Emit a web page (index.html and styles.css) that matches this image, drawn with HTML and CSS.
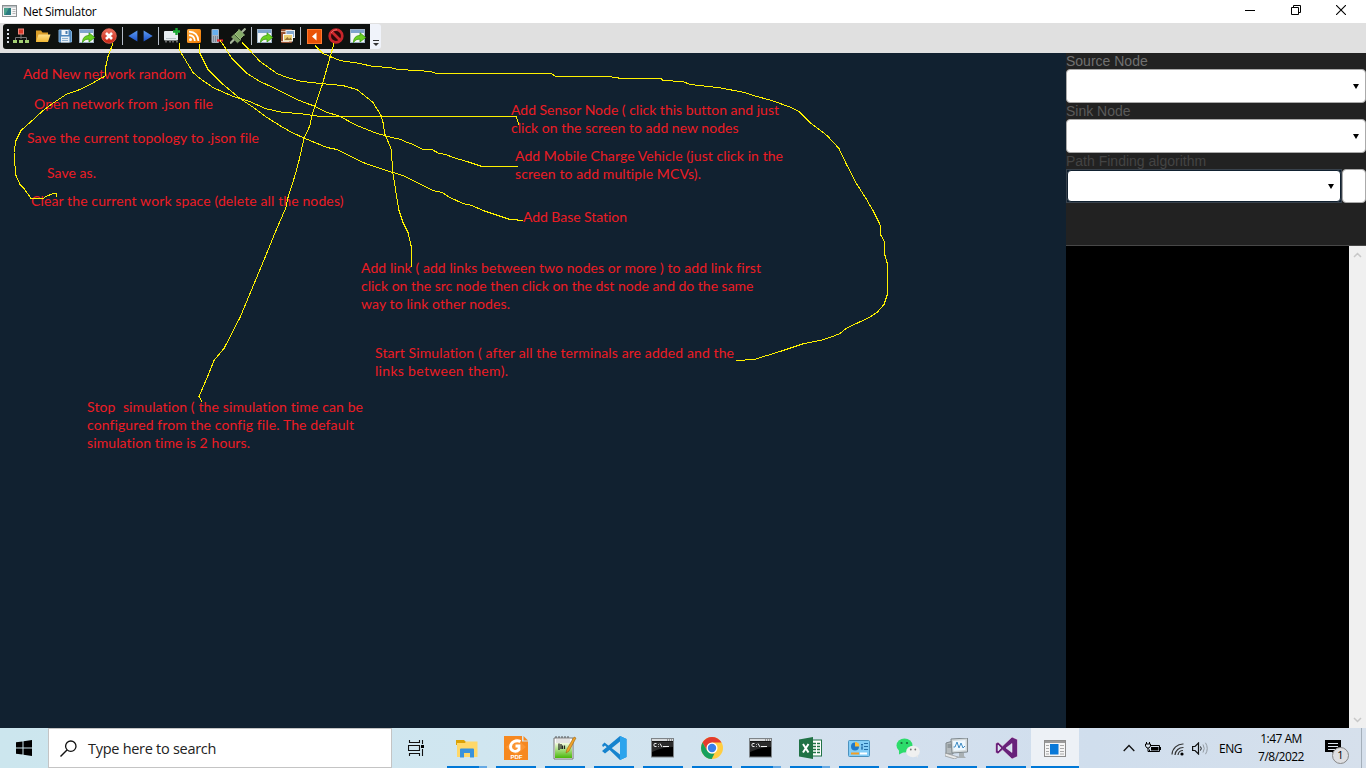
FILE: index.html
```html
<!DOCTYPE html>
<html lang="en">
<head>
<meta charset="utf-8">
<title>Net Simulator</title>
<link rel="stylesheet" href="styles.css">
</head>
<body>
<svg class="defs" width="0" height="0" aria-hidden="true">
  <defs>
    <linearGradient id="gFolder" x1="0" y1="0" x2="0" y2="1"><stop offset="0" stop-color="#ffe08a"/><stop offset="1" stop-color="#f2b733"/></linearGradient>
    <linearGradient id="gRed" x1="0" y1="0" x2="0" y2="1"><stop offset="0" stop-color="#ee7461"/><stop offset="1" stop-color="#c3200f"/></linearGradient>
    <linearGradient id="gOrange" x1="0" y1="0" x2="1" y2="1"><stop offset="0" stop-color="#ffab40"/><stop offset="1" stop-color="#f07800"/></linearGradient>
    <linearGradient id="gBlue" x1="0" y1="0" x2="0" y2="1"><stop offset="0" stop-color="#5e9df2"/><stop offset="1" stop-color="#1a50c8"/></linearGradient>
    <linearGradient id="gNote" x1="0" y1="0" x2="0" y2="1"><stop offset="0" stop-color="#f4fbe0"/><stop offset="1" stop-color="#49b80a"/></linearGradient>
    <symbol id="export" viewBox="0 0 16 16">
      <rect x=".5" y="1.500" width="14" height="13" fill="#f4f6f8" stroke="#9fb3c6"/>
      <rect x="1" y="2" width="13" height="3" fill="#7ea4cd"/>
      <path d="M3.500 14.500C3.500 10 6 7.500 10 7.500V4.800L15.700 9.500L10 14V11.200C7 11 5 12 3.500 14.500Z" fill="#6bd022" stroke="#3b9a12" stroke-width=".8"/>
    </symbol>
    <symbol id="cmd" viewBox="0 0 24 20">
      <rect x=".5" y=".5" width="22" height="18.500" fill="#000" stroke="#7d8387"/>
      <rect x="1" y="1" width="21" height="2" fill="#d7dadc"/>
      <path d="M16 2h1M18 2h1M20 2h1" stroke="#555"/>
      <path d="M1 3.500H22V9Q12 9 1 14Z" fill="#2b2b2b"/>
      <path d="M5.500 5.500H4Q3 5.500 3 6.500V7.500Q3 8.500 4 8.500H5.500M7.500 6V6.700M7.500 8V8.700M9 5.500L11 9M12 8.500H18" fill="none" stroke="#f1f1f1"/>
    </symbol>
  </defs>
</svg>

<div class="window">
  <header class="titlebar">
    <svg class="app-icon" width="15" height="12" viewBox="0 0 15 12"><rect x=".5" y=".5" width="14" height="11" fill="#f5f5f5" stroke="#8b9092"/><rect x="1" y="1" width="13" height="1.500" fill="#b9c0c3"/><rect x="2" y="3" width="7" height="7" fill="#2a7a80"/><path d="M2 3H7L3 10H2Z" fill="#4aa08a"/><path d="M10.500 4.500h3M10.500 6.500h3M10.500 8.500h3" stroke="#b5b5b5"/></svg>
    <span class="title">Net Simulator</span>
    <div class="window-controls">
      <svg width="10" height="10" viewBox="0 0 10 10"><path d="M0 5.500H10" stroke="#000"/></svg>
      <svg width="10" height="10" viewBox="0 0 10 10"><path d="M.5 2.500H7.500V9.500H.5ZM2.500 2.500V.5H9.500V7.500H7.500" fill="none" stroke="#000"/></svg>
      <svg width="10" height="10" viewBox="0 0 10 10"><path d="M0 0L10 10M10 0L0 10" stroke="#000" stroke-width="1.100"/></svg>
    </div>
  </header>

  <div class="toolbar-strip">
    <div class="toolbar">
      <svg class="grip" width="4" height="16" viewBox="0 0 4 16"><path d="M2 1V15" stroke="#d8dde4" stroke-width="2" stroke-dasharray="2 2"/></svg>
      <span class="tool"><svg width="16" height="16" viewBox="0 0 16 16"><path d="M8 6V11M2.500 12V9.500H13.500V12" fill="none" stroke="#777"/><rect x="5.500" y="1" width="5" height="5" fill="#d93a2c" stroke="#f08c80"/><path d="M0 12h4v3H0zM6 12h4v3H6zM12 12h4v3h-4z" fill="#a4cf74"/></svg></span>
      <span class="tool"><svg width="16" height="16" viewBox="0 0 16 16"><path d="M1 14V2.500H6L7.500 4.500H13V14Z" fill="#d99d29"/><path d="M1 14L3.500 6.500H15.500L13 14Z" fill="url(#gFolder)"/></svg></span>
      <span class="tool"><svg width="14" height="14" viewBox="0 0 14 14"><path d="M1 1H12L13.500 2.500V13H1Z" fill="#4f87bd" stroke="#7eb0dc"/><rect x="3.500" y="1" width="7" height="5" fill="#f2f6fa"/><rect x="7.500" y="2" width="2" height="3" fill="#4a7cad"/><rect x="3" y="7.500" width="8.500" height="6" fill="#e8eff5"/><path d="M4 9.500h6M4 11.500h6" stroke="#8fb2cf"/></svg></span>
      <span class="tool"><svg width="16" height="16"><use href="#export"/></svg></span>
      <span class="tool"><svg width="16" height="16" viewBox="0 0 16 16"><circle cx="8" cy="8" r="7.300" fill="url(#gRed)" stroke="#e86a58" stroke-width=".8"/><path d="M5 5L11 11M11 5L5 11" stroke="#fff" stroke-width="2.600"/></svg></span>
      <i class="separator"></i>
      <span class="tool arrow"><svg width="10" height="12" viewBox="0 0 9 11"><path d="M.2 5.500L8.500 .5V10.500Z" fill="url(#gBlue)"/></svg></span>
      <span class="tool arrow"><svg width="10" height="12" viewBox="0 0 9 11"><path d="M8.800 5.500L.5 .5V10.500Z" fill="url(#gBlue)"/></svg></span>
      <i class="separator"></i>
      <span class="tool"><svg width="16" height="16" viewBox="0 0 16 16"><rect x="0" y="3" width="14" height="9.500" rx="1" fill="#e6edf0"/><path d="M2 10.500h10" stroke="#b8c4c8"/><path d="M2 14.500V13M6 14.500V13M9 14.500V13M13 14.500V13" stroke="#bbb"/><path d="M12.500 0V7M9 3.500H16" stroke="#18a832" stroke-width="2.400"/></svg></span>
      <span class="tool"><svg width="14" height="14" viewBox="0 0 14 14"><rect width="14" height="14" rx="1.500" fill="url(#gOrange)"/><circle cx="3.500" cy="10.500" r="1.500" fill="#fff"/><path d="M2 6.200Q7.500 6.500 7.800 12M2 2.600Q11 3 11.400 12" fill="none" stroke="#fff" stroke-width="1.700"/></svg></span>
      <span class="tool"><svg width="14" height="16" viewBox="0 0 14 16"><rect x="2.500" y="1" width="7.500" height="14" rx="1" fill="#a9b5c2"/><rect x="3.500" y="2" width="5.500" height="5" fill="#67b0f0"/><path d="M4 9h1M6 9h1M8 9h1M4 11h1M6 11h1M8 11h1M4 13h1M6 13h1" stroke="#4e5c6c"/><path d="M8 12.500H14" stroke="#e5262b" stroke-width="2.200"/></svg></span>
      <span class="tool"><svg width="16" height="16" viewBox="0 0 16 16"><path d="M0 15.500L4 11.500M11.500 4.500L15.500 .5" stroke="#a7b59b" stroke-width="2.200"/><path d="M1.500 9L7.500 14.800L11 11.500L5 5.800Z" fill="#7c9e63" stroke="#9cba82" stroke-width=".6"/><path d="M5 6L9 2L14 7L10 11Z" fill="#86ad68" stroke="#a8c68a" stroke-width=".8"/><path d="M8.500 1.500L14.500 7.500" stroke="#86a86c" stroke-width="1.600"/><path d="M4.500 6.500L10 12" stroke="#3f6130"/></svg></span>
      <i class="separator"></i>
      <span class="tool"><svg width="16" height="16"><use href="#export"/></svg></span>
      <span class="tool"><svg width="15" height="16" viewBox="0 0 15 16"><rect x="1" y="1" width="11" height="14" rx="1" fill="#9b5534"/><path d="M1 3.500h8M1 13.500h8" stroke="#e0c3ad"/><rect x="6" y="2.500" width="8.500" height="7" fill="#84a8cd" stroke="#eee"/><rect x="3.500" y="6.500" width="9" height="6.500" fill="#edcf70" stroke="#f7f7f7"/><path d="M4.500 12L7.500 9L9 11L10.500 9.500L12 12Z" fill="#927232"/></svg></span>
      <i class="separator"></i>
      <span class="tool"><svg width="15" height="15" viewBox="0 0 15 15"><rect x=".5" y=".5" width="14" height="14" fill="#e95208" stroke="#ff7a30"/><path d="M5 7.500L9.500 3.500V11.500Z" fill="#fff"/></svg></span>
      <span class="tool"><svg width="16" height="16" viewBox="0 0 16 16"><circle cx="8" cy="8" r="6.300" fill="#2a0809" stroke="#c8252a" stroke-width="2.700"/><path d="M4 4L12 12" stroke="#cc282c" stroke-width="2.600"/><path d="M3 5Q5 1.500 9 1.600" fill="none" stroke="#ee7c78" stroke-width=".8"/></svg></span>
      <span class="tool"><svg width="16" height="16"><use href="#export"/></svg></span>
    </div>
    <div class="overflow"><svg width="6" height="7" viewBox="0 0 6 7"><path d="M0 .5H6" stroke="#333"/><path d="M0 3H6L3 6Z" fill="#333"/></svg></div>
  </div>

  <main class="workspace">
    <section class="canvas"></section>
    <aside class="sidebar">
      <div class="form">
        <label class="label source">Source Node</label>
        <div class="select"><i class="caret"></i></div>
        <label class="label sink">Sink Node</label>
        <div class="select"><i class="caret"></i></div>
        <label class="label path">Path Finding algorithm</label>
        <div class="row">
          <div class="focus-frame"><div class="select small"><i class="caret"></i></div></div>
          <div class="run"></div>
        </div>
      </div>
      <div class="console">
        <div class="scrollbar">
          <svg width="9" height="6" viewBox="0 0 9 6"><path d="M1 5L4.500 1.500L8 5" fill="none" stroke="#c8c8c8" stroke-width="1.500"/></svg>
          <svg width="9" height="6" viewBox="0 0 9 6"><path d="M1 1L4.500 4.500L8 1" fill="none" stroke="#c8c8c8" stroke-width="1.500"/></svg>
        </div>
      </div>
    </aside>
  </main>

  <footer class="taskbar">
    <div class="start"><svg width="16" height="16" viewBox="0 0 16 16"><path d="M0 2.300L6.500 1.400V7.500H0ZM7.500 1.200L16 0V7.500H7.500ZM0 8.500H6.500V14.600L0 13.700ZM7.500 8.500H16V16L7.500 14.800Z"/></svg></div>
    <div class="search">
      <svg width="17" height="17" viewBox="0 0 17 17"><circle cx="10.800" cy="6.200" r="5.200" fill="none" stroke="#111" stroke-width="1.300"/><path d="M7 10L.5 16.500" stroke="#111" stroke-width="1.400"/></svg>
      <span>Type here to search</span>
    </div>
    <div class="task-view"><svg width="17" height="16" viewBox="0 0 17 16"><path d="M1.500 0V2.500H11.500V0M1.500 16V13.500H11.500V16M.5 5.500H11.500V10.500H.5ZM14.500 0V4M14.500 9V16" fill="none" stroke="#111" stroke-width="1.100"/><rect x="13" y="5" width="3" height="3"/></svg></div>
    <div class="apps">
      <div class="app stacked"><svg width="22" height="19" viewBox="0 0 22 19"><path d="M0 1H8L10 3H21V6H0Z" fill="#dca206"/><path d="M1 4H9L10 2.500H21.500V18H1Z" fill="#ffd869"/><path d="M4 18.500V10.500Q4 9.500 5 9.500H17Q18 9.500 18 10.500V18.500H14V14H8V18.500Z" fill="#3992dc"/></svg></div>
      <div class="app"><svg width="24" height="24" viewBox="0 0 24 24"><path d="M0 0H18V5.500H24V24H0Z" fill="#f6881f"/><path d="M19.500 0L24 4.500H19.500Z" fill="#f6881f"/><path d="M2 11L12 2L22 11L12 19Z" fill="#ff9f3f" opacity=".6"/><path d="M16.500 5.500C12 3.500 7 6 6.500 10.500C6.500 15 12 17 15 13.500V10H11.500" fill="none" stroke="#fff" stroke-width="2.800"/><text x="6.500" y="22.500" class="pdf">PDF</text></svg></div>
      <div class="app"><svg width="24" height="24" viewBox="0 0 24 24"><path d="M1 2H20V23H1Z" fill="#fafafa" stroke="#777"/><path d="M2 7H19V22H2Z" fill="url(#gNote)"/><path d="M3 2V0M6 2V0M9 2V0M12 2V0M15 2V0" stroke="#555"/><path d="M3 4h14M3 6h14" stroke="#b8b8b8" stroke-width=".7"/><path d="M6 7.500V14M8 8V13M9.500 9.500V13M11.500 9.500V13" stroke="#222" stroke-width="1.200"/><path d="M13 17L14 13L21 1L23 2L16 15Z" fill="#f0a327" stroke="#9c6310" stroke-width=".6"/></svg></div>
      <div class="app"><svg width="25" height="24" viewBox="0 0 25 24"><path d="M18 0L24.500 3V21L18 24L3 9.500L1 11L0 9L2.500 6.500L18 18.500V5.500L3 17.500L0 15L18 0Z" fill="#1683ce"/><path d="M18 0L24.500 3V21L18 24Z" fill="#2ca4ed"/></svg></div>
      <div class="app"><svg width="24" height="20"><use href="#cmd"/></svg></div>
      <div class="app"><svg width="22" height="22" viewBox="0 0 22 22"><circle cx="11" cy="11" r="11" fill="#ffcd40"/><path d="M1.500 5.500A11 11 0 0 1 20.500 5.500H11L6.200 13.800Z" fill="#e33b2e"/><path d="M1.500 5.500L6.200 13.800Q8 16.500 11 16.500H13.500L10.700 22A11 11 0 0 1 1.500 5.500Z" fill="#16a05d"/><circle cx="11" cy="11" r="5.500" fill="#fff"/><circle cx="11" cy="11" r="4.200" fill="#397fe9"/></svg></div>
      <div class="app stacked"><svg width="24" height="20"><use href="#cmd"/></svg></div>
      <div class="app stacked"><svg width="23" height="22" viewBox="0 0 23 22"><rect x="12" y="3" width="10.500" height="16" fill="#fff" stroke="#217346"/><path d="M14 6.500h3M18 6.500h3M14 9.500h3M18 9.500h3M14 12.500h3M18 12.500h3M14 15.500h3M18 15.500h3" stroke="#217346" stroke-width="1.300"/><path d="M0 2.500L14 0V22L0 19.500Z" fill="#207245"/><path d="M4 7L9.500 15.500M9.500 7L4 15.500" stroke="#fff" stroke-width="2"/></svg></div>
      <div class="app"><svg width="22" height="17" viewBox="0 0 22 17"><rect x=".5" y=".5" width="21" height="16" rx="1" fill="#84cdf7" stroke="#4b92bf"/><circle cx="7" cy="6.500" r="4" fill="#2079c9"/><path d="M7 6.500V2A4.500 4.500 0 0 1 11.500 6.500Z" fill="#ffbb35"/><path d="M13 4.500h2M16 3.500h4M13 8h2M16 6.500h4M16 9.500h4M14 4v6" stroke="#246da7"/><path d="M3 13.500h8" stroke="#f49e24" stroke-width="2"/><path d="M12 13.500h7" stroke="#fff" stroke-width="2"/></svg></div>
      <div class="app"><svg width="24" height="20" viewBox="0 0 24 20"><ellipse cx="8.500" cy="7.500" rx="8" ry="7" fill="#2ddc6b"/><path d="M3 12L3 16.500L8 14Z" fill="#2ddc6b"/><circle cx="5.500" cy="5" r="1.100" fill="#186c3a"/><circle cx="11" cy="5" r="1.100" fill="#186c3a"/><ellipse cx="17" cy="13.500" rx="6.800" ry="5.700" fill="#f0f0f0"/><path d="M20 18L22 20L22 17Z" fill="#e8e8e8"/><circle cx="14.800" cy="11.500" r=".9" fill="#777"/><circle cx="19.300" cy="11.500" r=".9" fill="#777"/></svg></div>
      <div class="app"><svg width="24" height="21" viewBox="0 0 24 21"><path d="M1 5L8 3V16H1Z" fill="#b4babd" stroke="#7e878c"/><path d="M2.500 7h4M2.500 9h4" stroke="#6f787d"/><path d="M0 15L13 19L10 21L0 18Z" fill="#e8e9e9" stroke="#8e9192" stroke-width=".7"/><path d="M6 1L22.500 0V14L7 15Z" fill="#d2d8da" stroke="#7f898e"/><path d="M8 3L20.500 2V12L8.500 13Z" fill="#edf8ff"/><path d="M8.500 9H10L12 4L14 10L16 5L18 10L20 8" fill="none" stroke="#3f8cc4"/><path d="M14 15H19V18L21 20H12L14 18Z" fill="#a9b0b3"/></svg></div>
      <div class="app"><svg width="23" height="22" viewBox="0 0 23 22"><path d="M17 0L22.500 2.500V19.500L17 22L7.500 13L3 17L.5 15.500V6.500L3 5L7.500 9ZM3 8V14L6 11ZM17 6.500L11 11L17 15.500Z" fill="#68217a" fill-rule="evenodd" stroke="#fff" stroke-width=".5"/></svg></div>
      <div class="app active"><svg width="22" height="17" viewBox="0 0 22 17"><rect x=".5" y=".5" width="21" height="16" fill="#f5f5f5" stroke="#8c8c8c"/><rect x="1" y="1" width="20" height="2" fill="#9a9a9a"/><rect x="6" y="4" width="8.500" height="10.500" fill="#0878d8"/><path d="M2 5.500h3M2 8.500h3M2 11.500h3M16 5.500h4M16 8.500h4M16 11.500h4M2 14h3M16 14h4" stroke="#aaa"/></svg></div>
    </div>
    <div class="tray">
      <svg width="12" height="8" viewBox="0 0 12 8"><path d="M.7 7L6 1.500L11.300 7" fill="none" stroke="#111" stroke-width="1.300"/></svg>
      <svg class="battery" width="16" height="12" viewBox="0 0 16 12"><path d="M5.500 3.500H14.500V9.500H4.500V7.500" fill="none" stroke="#000"/><rect x="6" y="5" width="7.500" height="3.500"/><path d="M15.500 5V8M1.500 0V2M4.500 0V2M3 5V9.500H5" fill="none" stroke="#000"/><path d="M.5 2H5.500V4L4 6H2L.5 4Z" fill="#dce6f0" stroke="#000"/></svg>
      <svg class="wifi" width="14" height="13" viewBox="0 0 14 13"><path d="M1 11.500A11 11 0 0 1 12.500 1M4 12A8 8 0 0 1 12.500 4.500M7 12A5 5 0 0 1 12 7.500" fill="none" stroke="#333" stroke-width="1.200"/><circle cx="11" cy="11" r="1.600"/></svg>
      <svg class="volume" width="17" height="13" viewBox="0 0 17 13"><path d="M.6 4.500H3L6.500 1V12L3 8.500H.6Z" fill="none" stroke="#111" stroke-width="1.200"/><path d="M8.500 4.500Q10 6.500 8.500 8.500" fill="none" stroke="#111"/><path d="M11 2.500Q13.500 6.500 11 10.500M13.500 .8Q17 6.500 13.500 12.200" fill="none" stroke="#939ba2"/></svg>
      <span class="lang">ENG</span>
      <div class="clock"><span class="time">1:47 AM</span><span class="date">7/8/2022</span></div>
      <div class="notify"><svg width="16" height="16" viewBox="0 0 16 16"><path d="M0 0H16V12H11V16L7 12H0Z"/><path d="M3 3.500h10M3 6.500h10M3 9.500h7" stroke="#dce3ec"/></svg><span class="badge">1</span></div>
      <i class="peek"></i>
    </div>
  </footer>

  <!-- Hand-drawn notes that link each toolbar button to its description -->
  <svg class="notes" width="1366" height="728" viewBox="0 0 1366 728">
    <g class="texts">
      <text x="23" y="79" textLength="163">Add New network random</text>
      <text x="34" y="109" textLength="179">Open network from .json file</text>
      <text x="27" y="143" textLength="232">Save the current topology to .json file</text>
      <text x="47" y="178" textLength="49">Save as.</text>
      <text x="31" y="206" textLength="312.500">Clear the current work space (delete all the nodes)</text>
      <text x="511" y="115" textLength="268">Add Sensor Node ( click this button and just</text>
      <text x="511" y="133" textLength="227.500">click on the screen to add new nodes</text>
      <text x="515" y="161" textLength="268">Add Mobile Charge Vehicle (just click in the</text>
      <text x="515" y="179" textLength="186">screen to add multiple MCVs).</text>
      <text x="523" y="222" textLength="104">Add Base Station</text>
      <text x="361" y="273" textLength="400">Add link ( add links between two nodes or more ) to add link first</text>
      <text x="361" y="291" textLength="392.500">click on the src node then click on the dst node and do the same</text>
      <text x="361" y="309" textLength="149">way to link other nodes.</text>
      <text x="375" y="358" textLength="359">Start Simulation ( after all the terminals are added and the</text>
      <text x="375" y="376" textLength="133">links between them).</text>
      <text x="87" y="412" textLength="276" xml:space="preserve">Stop  simulation ( the simulation time can be</text>
      <text x="87" y="430" textLength="267">configured from the config file. The default</text>
      <text x="87" y="448" textLength="163">simulation time is 2 hours.</text>
    </g>
    <g class="strokes" transform="translate(0 .5)">
      <polyline points="113,43 111,48 108,56 106,65 105,76 102,77 92,83 80,89 66,94 54,102 42,111 30,122 21,130 16,140 14,152 14,160 15,165 16,175 20,184 24,188 31,198 43,198 46,196 53,193 56,193 56,196"/>
      <polyline points="179,42 179,49 193,72 200,78 213,87 233,96 250,101 265,108 283,112 300,113 320,116 516,116 519,124"/>
      <polyline points="199,43 200,53 208,69 222,83 240,98 252,106 267,117 283,127 292,132 305,138 327,147 337,149 363,162 383,169 393,172 403,175 433,190 442,192 450,197 463,203 472,205 483,210 510,219 517,219 518,220 523,220"/>
      <polyline points="220,40 223,44 232,58 247,73 260,81 273,87 297,99 307,103 313,105 327,112 338,115 357,125 377,133 392,137 401,139 407,142 411,143 423,149 432,149 439,153 446,154 453,157 467,161 482,166 518,166"/>
      <polyline points="242,42 250,50 260,61 277,73 287,77 302,81 320,83 343,85 346,86 357,89 373,102 381,115 383,122 385,134 391,148 393,173 396,192 399,210 403,222 408,232 411,245 411,266"/>
      <polyline points="315,45 323,53 340,60 360,63 373,66 390,67 398,69 418,70 430,71 437,73 551,73 556,76 608,76 622,78 661,78 663,80 683,81 690,84 718,87 745,92 753,95 772,100 791,107 799,111 810,122 827,135 839,148 846,163 857,184 866,198 873,210 880,224 881,235 884,240 885,255 887,262 887,295 884,304 877,312 869,317 846,328 840,333 830,337 820,340 804,343 780,351 754,359 736,360"/>
      <polyline points="334,43 330,57 322,85 315,105 312,115 310,125 304,138 299,160 295,175 288,197 286,207 276,230 265,257 240,317 224,348 214,360 208,375 199,396 202,401"/>
    </g>
  </svg>
</div>
</body>
</html>
```
FILE: styles.css
```css
* { box-sizing: border-box; }
body { margin: 0; overflow: hidden; background: #112130; font-family: "Open Sans", sans-serif; }
svg { display: block; flex: none; }
.defs { position: absolute; }
.window { position: relative; width: 1366px; height: 768px; display: flex; flex-direction: column; }

.titlebar { height: 23px; background: #fff; display: flex; align-items: center; padding: 0 20px 0 2px; }
.title { margin-left: 6px; font-size: 12px; letter-spacing: -.3px; color: #000; white-space: nowrap; }
.app-icon { margin-bottom: 1px; }
.window-controls { margin-left: auto; display: flex; gap: 35.500px; margin-bottom: 3px; }

.toolbar-strip { height: 30px; background: #e0e0e0; display: flex; padding: 1px 0 5px 3px; }
.toolbar { width: 367px; height: 25px; display: flex; align-items: center; background: #0e110f; border-radius: 3px 0 0 3px; padding: 0 0 1px 3px; }
.grip { margin-right: 0; }
.tool { width: 22px; height: 24px; display: flex; align-items: center; justify-content: center; flex: none; }
.tool.arrow { width: 15.500px; }
.separator { width: 1px; height: 18px; margin: 0 2px; background: #b5bcc6; flex: none; }
.overflow { width: 11px; height: 25px; background: #f0f3fa; border-radius: 0 3px 3px 0; display: flex; align-items: flex-end; justify-content: center; padding-bottom: 2px; }

.workspace { height: 675px; display: flex; }
.canvas { flex: 1; background: #112130; }
.sidebar { width: 300px; display: flex; flex-direction: column; background: #222; }
.form { height: 193px; border-bottom: 1px solid #484848; }
.label { display: block; height: 16px; font: 14px/16px "Liberation Sans", Arial, sans-serif; }
.source { color: #707070; }
.sink { color: #5a5a5a; }
.path { color: #444; }
.select { height: 34px; background: #fff; border: 1px solid #aaa; border-radius: 4px; display: flex; align-items: center; justify-content: flex-end; padding-right: 6px; }
.caret { border: 3px solid transparent; border-top: 5px solid #000; border-bottom: 0; }
.row { display: flex; }
.focus-frame { width: 276px; height: 34px; background: #112130; border: 1px solid #39424c; }
.select.small { height: 32px; border: 1px solid #112130; border-radius: 4px; }
.run { width: 24px; height: 34px; background: #fff; border: 1px solid #aaa; border-radius: 4px; }
.console { flex: 1; background: #000; display: flex; justify-content: flex-end; }
.scrollbar { width: 17px; background: #f0f0f0; display: flex; flex-direction: column; align-items: center; justify-content: space-between; padding: 6px 0 5px; }

.taskbar { height: 40px; display: flex; background: linear-gradient(90deg, #cce6ee 0, #d0e6f0 35%, #d4e0ee 65%, #d0deed 80%, #d6e0ec 100%); }
.start { width: 48px; display: flex; align-items: center; justify-content: center; }
.search { width: 344px; background: #fff; border: 1px solid #c4c4c4; display: flex; align-items: center; gap: 11px; padding-left: 11px; font-size: 14.500px; letter-spacing: -.28px; color: #222; white-space: nowrap; }
.task-view { width: 51px; display: flex; align-items: center; padding-left: 16px; }
.apps { display: flex; gap: 1px; }
.app { width: 48px; height: 40px; padding: 0 4px; display: grid; grid-template-rows: 38px 2px; place-items: center; }
.app svg { margin-top: 2px; }
.app::after { content: ""; width: 40px; height: 2px; background: #0078d7; }
.app.stacked::after { background: linear-gradient(90deg, #0078d7 32px, #65a9e4 32px); }
.app.active { background: #edf1f6; padding: 0; }
.app.active::after { width: 48px; }
.pdf { font: bold 6px "Liberation Sans", sans-serif; fill: #fff; }
.tray { flex: 1; display: flex; align-items: center; padding-left: 44px; }
.battery { margin-left: 10px; }
.wifi { margin: 2px 0 0 10px; }
.volume { margin-left: 7px; }
.lang { width: 24px; margin-left: 10px; font-size: 12px; letter-spacing: -.5px; }
.clock { width: 60px; margin-left: 8px; display: flex; flex-direction: column; align-items: center; font-size: 12px; line-height: 18px; letter-spacing: -.5px; white-space: nowrap; }
.notify { position: relative; margin-left: 14px; }
.badge { position: absolute; left: 7px; top: 7px; width: 17px; height: 17px; border: 1px solid #888; border-radius: 50%; background: #dedfe2; font-size: 11px; line-height: 14px; text-align: center; }
.peek { width: 1px; height: 40px; margin-left: auto; margin-right: 4px; background: #a4afba; }

.notes { position: absolute; left: 0; top: 0; pointer-events: none; }
.texts { font: 14px Lato, sans-serif; font-variant-ligatures: none; fill: #ed1c24; }
.strokes { fill: none; stroke: #fff200; stroke-width: 1; shape-rendering: crispEdges; }
```
